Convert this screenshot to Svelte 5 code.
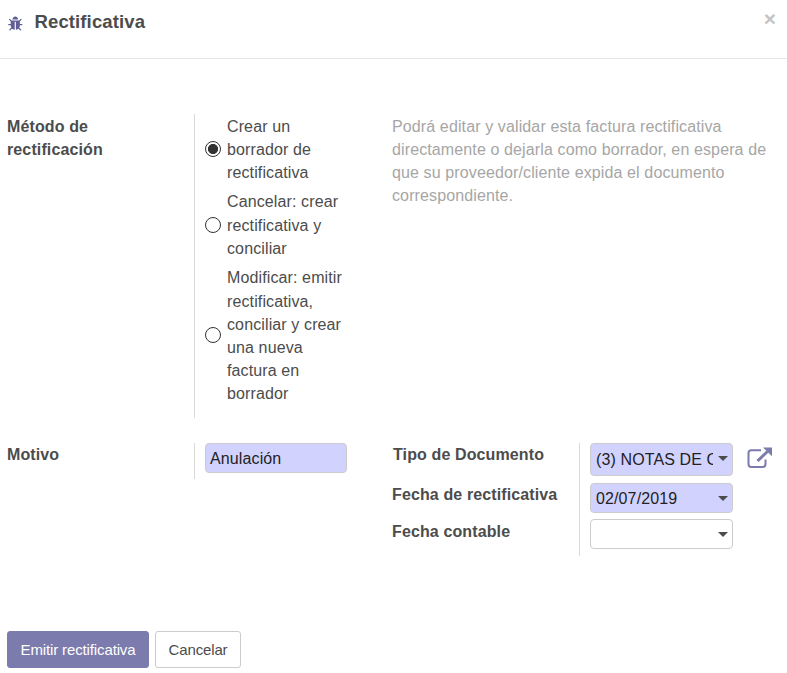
<script>
  const methods = [
    { id: 'refund', label: 'Crear un borrador de rectificativa' },
    { id: 'cancel', label: 'Cancelar: crear rectificativa y conciliar' },
    { id: 'modify', label: 'Modificar: emitir rectificativa, conciliar y crear una nueva factura en borrador' }
  ];
  let method = $state('refund');
  let reason = $state('Anulación');
</script>

<div class="dialog">
  <header>
    <svg class="bug" viewBox="32 0 1664 1792" aria-hidden="true">
      <path d="M1696 960q0 26-19 45t-45 19h-224q0 171-67 290l208 209q19 19 19 45t-19 45q-18 19-45 19t-45-19l-198-197q-5 5-15 13t-42 28.500-65 36.500-82 29-97 13v-896h-128v896q-51 0-101.500-13.500t-87-33-66-39-43.500-32.500l-15-14-183 207q-20 21-48 21-24 0-43-16-19-18-20.500-44.500t15.500-46.500l202-227q-58-114-58-274h-224q-26 0-45-19t-19-45 19-45 45-19h224v-294l-173-173q-19-19-19-45t19-45 45-19 45 19l173 173h844l173-173q19-19 45-19t45 19 19 45-19 45l-173 173v294h224q26 0 45 19t19 45zm-480-576h-640q0-133 93.500-226.500t226.500-93.500 226.500 93.500 93.500 226.500z" />
    </svg>
    <h1>Rectificativa</h1>
    <button class="close" aria-label="Cerrar">×</button>
  </header>

  <main>
    <section class="row method">
      <div class="label">Método de rectificación</div>
      <div class="field radios">
        {#each methods as m (m.id)}
          <label>
            <input type="radio" name="method" value={m.id} bind:group={method} />
            <span>{m.label}</span>
          </label>
        {/each}
      </div>
      <p class="help">Podrá editar y validar esta factura rectificativa directamente o dejarla como borrador, en espera de que su proveedor/cliente expida el documento correspondiente.</p>
    </section>

    <section class="row details">
      <div class="label">Motivo</div>
      <div class="field reason"><input class="box" type="text" bind:value={reason} /></div>
      <div class="labels">
        <div class="first">Tipo de Documento</div>
        <div>Fecha de rectificativa</div>
        <div>Fecha contable</div>
      </div>
      <div class="field values">
        <div class="doc">
          <div class="box select tall"><span>(3) NOTAS DE C</span><i></i></div>
          <svg class="open" viewBox="0 0 26 22" aria-hidden="true">
            <path d="M14 3.200H4.400Q1.500 3.200 1.500 6.100V17.100Q1.500 20 4.400 20H15.600Q18.500 20 18.500 17.100V12.500" fill="none" stroke="currentColor" stroke-width="2" />
            <path d="M10.500 14L20.500 4.500" fill="none" stroke="currentColor" stroke-width="3" />
            <path d="M16 0.500H25V9.300Z" fill="currentColor" />
          </svg>
        </div>
        <div class="box select date"><span>02/07/2019</span><i></i></div>
        <div class="box select empty"><span></span><i></i></div>
      </div>
    </section>
  </main>

  <footer>
    <button class="btn primary">Emitir rectificativa</button>
    <button class="btn">Cancelar</button>
  </footer>
</div>

<style>
  .dialog {
    box-sizing: border-box;
    width: 787px;
    height: 673px;
    overflow: hidden;
    background: #fff;
    color: #4c4c4c;
    font: 16px/23.14px "Liberation Sans", Arial, sans-serif;
    letter-spacing: 0.12px;
    display: flex;
    flex-direction: column;
  }
  header {
    box-sizing: border-box;
    height: 59px;
    border-bottom: 1px solid #e5e5e5;
    display: flex;
    align-items: flex-start;
    padding: 0 11px 0 6.500px;
    flex: none;
  }
  .bug { width: 16px; height: 16px; margin-top: 16px; fill: #5f5e97; }
  h1 { margin: 10px 0 0 12px; font-size: 18.500px; line-height: 24px; font-weight: bold; flex: 1; }
  .close {
    border: 0; padding: 0; margin-top: 8px; background: none; color: #c4c4c4;
    font: bold 21px/22px "Liberation Sans", Arial, sans-serif;
  }
  main { flex: 1; padding: 56px 0 0 7px; }
  .row { display: flex; align-items: flex-start; }
  .label, .labels { font-weight: bold; }
  .label { width: 187px; box-sizing: border-box; padding-right: 60px; }
  .field { border-left: 1px solid #d9d9d9; box-sizing: border-box; padding-left: 10px; }
  .method { height: 329px; box-sizing: border-box; margin-top: -1px; }
  .method .label, .help { padding-top: 1px; }
  .radios { width: 198px; height: 304px; display: flex; flex-direction: column; gap: 6.530px; padding-top: 0.500px; }
  .radios label { display: flex; align-items: center; width: 142px; }
  .radios input {
    appearance: none; flex: none; box-sizing: border-box; width: 16px; height: 16px;
    margin: 0 6px 1px 0; border: 1px solid #333; border-radius: 50%; background: #fff;
  }
  .radios input:checked { background: radial-gradient(circle, #333 4.700px, #fff 5.400px); }
  .help { margin: 0; width: 386px; color: #a6a6a6; }
  .details .label { padding-top: 0; }
  .reason { width: 198px; height: 36px; }
  .box {
    box-sizing: border-box; width: 143px; height: 30px; border: 1px solid #ccc; border-radius: 4px;
    background: #d2d2ff; color: #222; padding: 0 5px;
    font: 16px/28px "Liberation Sans", Arial, sans-serif;
    letter-spacing: 0.120px;
  }
  input.box { display: block; width: 142px; padding: 1px 4px 0; }
  .labels { width: 187px; display: flex; flex-direction: column; }
  .labels .first { height: 40px; padding-left: 1px; }
  .labels div + div { height: 37px; }
  .values { height: 113px; }
  .doc { display: flex; }
  .select { display: flex; justify-content: space-between; align-items: center; padding: 0 4px 0 5px; }
  .select span { width: 117px; overflow: hidden; white-space: nowrap; }
  .select i { width: 0; height: 0; border: 5px solid transparent; border-top-color: #4c4c4c; border-bottom: 0; margin-top: 1px; }
  .tall { height: 33px; line-height: 31px; }
  .tall i { margin-top: -2px; }
  .open { width: 26px; height: 22px; margin: 4px 0 0 14px; color: #7c7bad; }
  .date { margin-top: 7px; line-height: 29px; }
  .empty { margin-top: 6px; background: #fff; }
  footer { display: flex; gap: 6px; padding: 0 7px 5px; flex: none; }
  .btn {
    box-sizing: border-box; height: 37px; width: 86px; padding: 0; border: 1px solid #ccc; border-radius: 3px;
    background: #fff; color: #4c4c4c; font: 15px/35px "Liberation Sans", Arial, sans-serif; white-space: nowrap;
    letter-spacing: -0.130px;
  }
  .primary { width: 142px; background: #7c7bad; border-color: #7c7bad; color: #fff; }
</style>
